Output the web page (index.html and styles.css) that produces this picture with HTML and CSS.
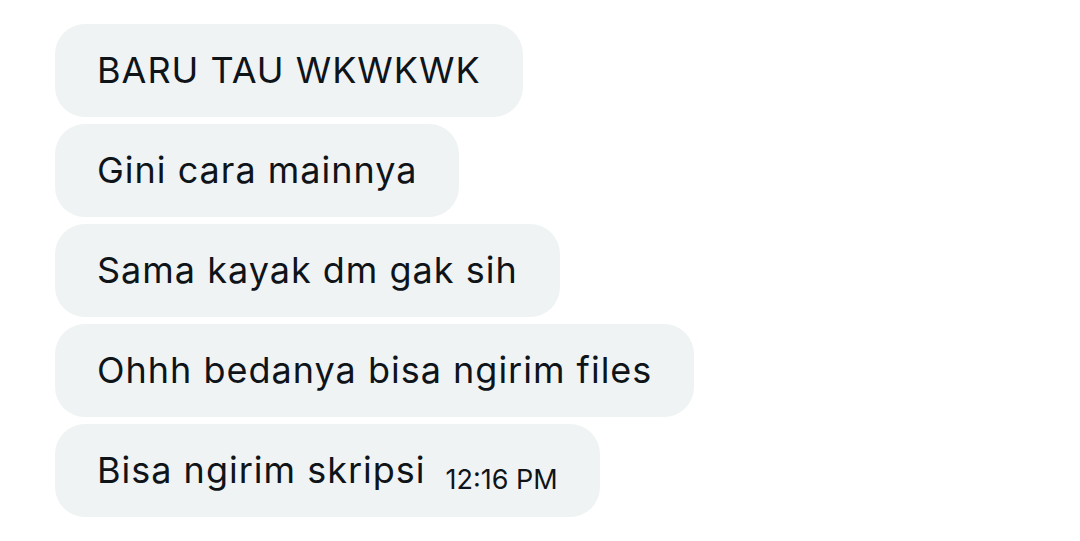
FILE: index.html
```html
<!DOCTYPE html>
<html>
<head>
<meta charset="utf-8">
<link rel="stylesheet" href="styles.css">
</head>
<body>
<div class="chat">
  <div class="bubble">BARU TAU WKWKWK</div>
  <div class="bubble">Gini cara mainnya</div>
  <div class="bubble">Sama kayak dm gak sih</div>
  <div class="bubble">Ohhh bedanya bisa ngirim files</div>
  <div class="bubble"><span>Bisa ngirim skripsi</span><span class="time">12:16 PM</span></div>
</div>
</body>
</html>
```
FILE: styles.css
```css
html, body {
  margin: 0;
  background: #ffffff;
}
body {
  font-family: Inter, Roboto, "Noto Sans", sans-serif;
  color: #0f1419;
}
.chat {
  display: flex;
  flex-direction: column;
  align-items: flex-start;
  gap: 7px;
  padding: 24px 0 0 55px;
}
.bubble {
  box-sizing: border-box;
  height: 93px;
  display: flex;
  align-items: baseline;
  padding: 25px 42px 0 42px;
  background: #eff3f4;
  border-radius: 30px;
  font-size: 36px;
  letter-spacing: 1px;
  line-height: 42px;
  white-space: nowrap;
}
.time {
  font-size: 27px;
  letter-spacing: 0;
  margin-left: 20px;
  position: relative;
  top: 6px;
}
```
